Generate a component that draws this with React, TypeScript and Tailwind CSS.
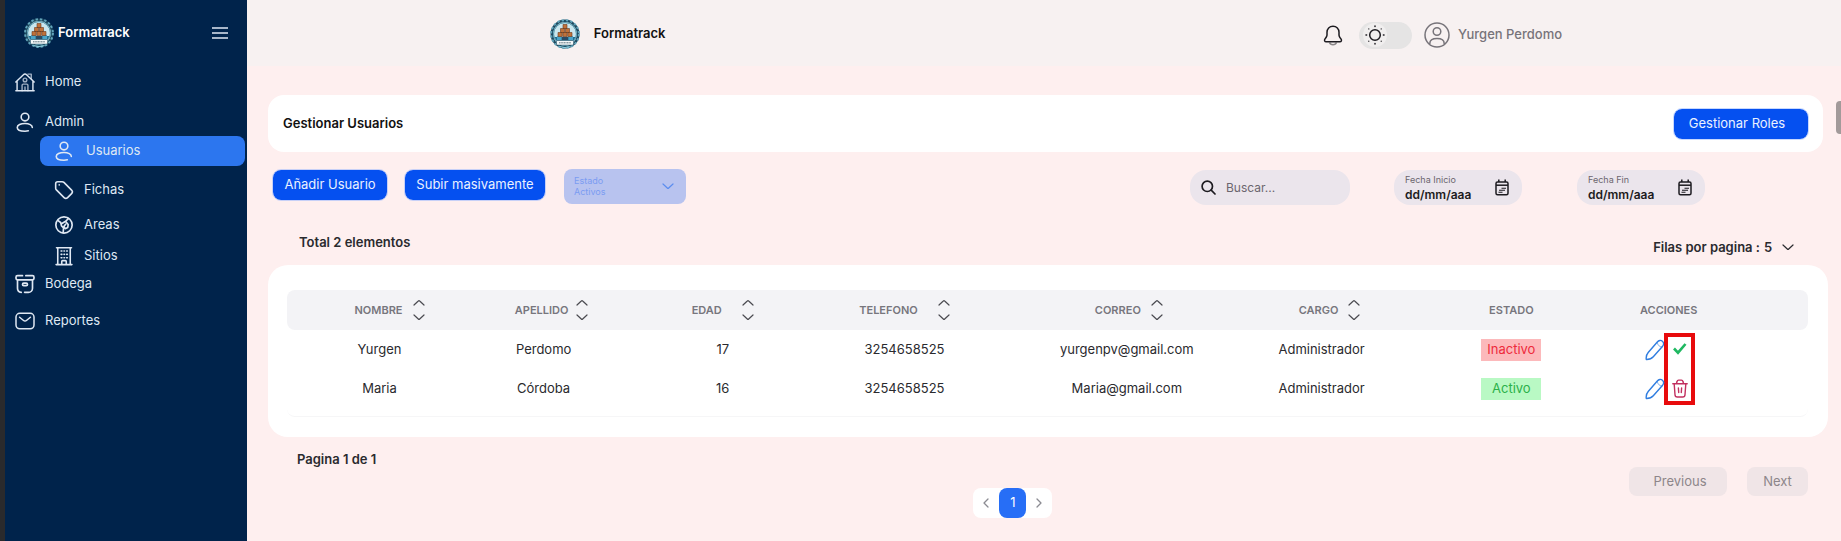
import React from "react";

type IconProps = { className?: string };

function Icon({ className = "size-5", children, sw = 1.6 }: IconProps & { children: React.ReactNode; sw?: number }) {
  return (
    <svg viewBox="0 0 24 24" fill="none" stroke="currentColor" strokeWidth={sw} strokeLinecap="round" strokeLinejoin="round" className={`shrink-0 ${className}`} aria-hidden="true">
      {children}
    </svg>
  );
}

const HomeIcon = () => (
  <Icon className="size-5" sw={1.7}>
    <path d="M1 22.500h22M2.500 11v11.500M21.500 11v11.500M1 12 9.800 3.500a3.300 3.300 0 0 1 4.400 0L23 12" />
    <path d="M15.500 2.500h4v5.500" opacity=".7" />
    <circle cx="12" cy="9.500" r="2.200" opacity=".7" />
    <path d="M8.500 22.500V16a1.500 1.500 0 0 1 1.500-1.500h4a1.500 1.500 0 0 1 1.500 1.500v6.500M12 18v4" opacity=".7" />
  </Icon>
);

const UserIcon = () => (
  <Icon className="size-5" sw={1.9}>
    <circle cx="12" cy="6" r="4.600" />
    <path d="M20.800 18.500c0-2.800-3.800-4.700-8.800-4.700s-9.300 1.900-9.300 4.700 4 4.500 9.300 4.500c1.500 0 2.800-.1 4-.4" />
  </Icon>
);

const TagIcon = () => (
  <Icon className="size-5" sw={1.9}>
    <path d="M2 4.500A2.500 2.500 0 0 1 4.500 2h5.300a3 3 0 0 1 2.100.9l9.200 9.200a3 3 0 0 1 0 4.200l-4.800 4.800a3 3 0 0 1-4.200 0L2.900 11.900A3 3 0 0 1 2 9.800z" />
    <path d="M6.300 5.800v.1" />
  </Icon>
);

const GlobeIcon = () => (
  <Icon className="size-5" sw={2}>
    <circle cx="12" cy="12" r="9.800" />
    <path d="M4.500 6.500 8 9l1 4 2.500 2.500-.5 5.500M17.500 4 14 7.500 9 10.500M14.500 8.500l2.500 3-.5 3.500-3 1.500-1.500-3 2-2.500" />
  </Icon>
);

const BuildingIcon = () => (
  <Icon className="size-5" sw={1.9}>
    <path d="M3 2h18M4.500 2v20M19.500 2v20M2.500 22.300h19M9.300 22v-3.500a1 1 0 0 1 1-1h3.400a1 1 0 0 1 1 1V22" />
    <path d="M8.500 6h1M12 6h.6M15.200 6h.8M8.500 10h1M12 10h.6M15.200 10h.8M8.500 14h1M12 14h.6M15.200 14h.8" />
  </Icon>
);

const BoxIcon = () => (
  <Icon className="size-5" sw={2}>
    <path d="M9 2H3a1.800 1.800 0 0 0-1.800 1.800v1.400A1.800 1.800 0 0 0 3 7h18a1.800 1.800 0 0 0 1.800-1.800V3.800A1.800 1.800 0 0 0 21 2h-8" />
    <path d="M3 7.500V17a5 5 0 0 0 4.500 5M21 7.500V17a5 5 0 0 1-5 5h-4.500" />
    <rect x="9" y="11" width="6" height="3" rx="1.500" />
  </Icon>
);

const MailIcon = () => (
  <Icon className="size-5" sw={1.8}>
    <rect x="1.200" y="2.800" width="21.600" height="18.500" rx="4.500" />
    <path d="m5.500 7.500 4.400 3.600a3.300 3.300 0 0 0 4.200 0l4.400-3.600" />
  </Icon>
);

function Logo() {
  return (
    <svg viewBox="0 0 30 30" className="size-[30px] shrink-0" aria-hidden="true">
      <circle cx="15" cy="15" r="13.200" fill="#c9e6ee" stroke="#1d4a60" strokeWidth="2.600" />
      <circle cx="15" cy="15" r="13.900" fill="none" stroke="#63a5bb" strokeWidth="2" strokeDasharray="2.400 2" />
      <circle cx="15" cy="15" r="11.400" fill="none" stroke="#2c7d98" strokeWidth=".8" />
      <path d="M4.500 18h21a11 11 0 0 1-21 0z" fill="#1f6f93" />
      <path d="M7 17h4.500v4H7zM18.500 17H23v4h-4.500z" fill="#4ba3c7" />
      <g fill="#c0713a" stroke="#6b3a1f" strokeWidth=".6">
        <path d="M13 5.500h4v4h-4zM10.500 9.500h4v4h-4zM15.500 9.500h4v4h-4zM8 13.500h4.200v4H8zM12.900 13.500h4.200v4h-4.200zM17.800 13.500H22v4h-4.200z" />
      </g>
      <path d="M12 18h6v3h-6z" fill="#2b4a63" />
      <rect x="6.500" y="21.500" width="17" height="4.600" rx="1" fill="#f4f8f9" stroke="#1d4a60" strokeWidth=".5" />
      <path d="M9 23.800h12" stroke="#5b6f7b" strokeWidth="1" strokeDasharray="1.200 .4" />
      <path d="M9.500 27.600q5.500 1.800 11 0" stroke="#8fd0e2" fill="none" />
    </svg>
  );
}

const Chevron = ({ className = "" }: IconProps) => (
  <svg viewBox="0 0 12 7" fill="none" stroke="currentColor" strokeWidth="1.200" strokeLinecap="round" strokeLinejoin="round" className={`h-[7px] w-3 shrink-0 ${className}`} aria-hidden="true">
    <path d="M1 1l4.300 4a1 1 0 0 0 1.400 0L11 1" />
  </svg>
);

const PageChevron = ({ className = "" }: IconProps) => (
  <svg viewBox="0 0 6 10" fill="none" stroke="currentColor" strokeWidth="1.300" strokeLinecap="round" strokeLinejoin="round" className={`h-2.5 w-1.5 ${className}`} aria-hidden="true">
    <path d="M5 1 1 5l4 4" />
  </svg>
);

const CalendarIcon = () => (
  <svg viewBox="0 0 14 17" fill="none" stroke="currentColor" className="h-[17px] w-[14px] shrink-0 text-[#1d1b20]" aria-hidden="true">
    <rect x="1" y="3" width="12" height="12.800" rx="1.500" strokeWidth="1.500" />
    <path d="M1 6.200h12" strokeWidth="1.500" />
    <path d="M3.800.6V3M10.200.6V3" strokeWidth="1.500" />
    <path d="M6.500 9.300H11M4 11.300h6M3.500 13.200h4" strokeWidth="1.100" />
  </svg>
);

const PencilIcon = () => (
  <svg viewBox="0 0 20 22" fill="none" stroke="#2f7de0" strokeWidth="1.400" strokeLinecap="round" strokeLinejoin="round" className="h-[22px] w-5 shrink-0" aria-hidden="true">
    <path d="M1.300 20.500c-.4-2.500.2-5 1.900-7L12.300 3c1.500-1.800 3.600-2.100 5.100-.8s1.500 3.500 0 5.300L8.300 17.800c-1.600 1.900-3.600 2.800-7 2.700z" />
    <path d="M12.300 3.500c.2 2.500 2 4.300 4.500 4.500" strokeWidth="1" opacity=".6" />
  </svg>
);

const TrashIcon = () => (
  <svg viewBox="0 0 16 19" fill="none" stroke="#c22f5f" strokeWidth="1.400" strokeLinecap="round" strokeLinejoin="round" className="h-[19px] w-4" aria-hidden="true">
    <path d="M.8 4.800h14.400M4.500 4.500l.6-2.200a1.500 1.500 0 0 1 1.500-1.200h2.800a1.500 1.500 0 0 1 1.500 1.200l.6 2.200M2.200 5l.8 10.800A2.300 2.300 0 0 0 5.300 18h5.400a2.300 2.300 0 0 0 2.300-2.200L13.800 5M6.400 9l.3 4.500M9.600 9l-.3 4.500" />
  </svg>
);

const CheckIcon = () => (
  <svg viewBox="0 0 16 19" fill="none" stroke="#1fb861" strokeWidth="2.600" className="h-[19px] w-4" aria-hidden="true">
    <path d="M2 8.500l4 4.200L13.500 4" />
  </svg>
);

const navItems = [
  { label: "Home", icon: <HomeIcon />, row: "h-10 pl-[15px] gap-2.5" },
  { label: "Admin", icon: <UserIcon />, row: "mt-1.5 h-7 pl-[15px] gap-2.5" },
  { label: "Usuarios", icon: <UserIcon />, row: "ml-10 mr-0.5 h-[30px] rounded-lg bg-[#2c76ef] pl-[14px] gap-3" },
  { label: "Fichas", icon: <TagIcon />, row: "mt-2 h-8 pl-[54px] gap-2.5" },
  { label: "Areas", icon: <GlobeIcon />, row: "mt-0.5 h-[34px] pl-[54px] gap-2.5" },
  { label: "Sitios", icon: <BuildingIcon />, row: "h-7 pl-[54px] gap-2.5" },
  { label: "Bodega", icon: <BoxIcon />, row: "h-7 pl-[15px] gap-2.5" },
  { label: "Reportes", icon: <MailIcon />, row: "mt-2 h-[30px] pl-[15px] gap-2.5" },
];

const columns = [
  { label: "NOMBRE", head: "w-[11.9%] pl-6", gap: "gap-2.5", cell: "pl-1" },
  { label: "APELLIDO", head: "w-[11%]", gap: "gap-2", cell: "pr-4" },
  { label: "EDAD", head: "w-[11.5%]", gap: "gap-5", cell: "" },
  { label: "TELEFONO", head: "w-[12.4%]", gap: "gap-5", cell: "" },
  { label: "CORREO", head: "w-[17.1%]", gap: "gap-2.5", cell: "pr-1" },
  { label: "CARGO", head: "w-[9.3%]", gap: "gap-2.5", cell: "pr-4" },
];

const users = [
  { cells: ["Yurgen", "Perdomo", "17", "3254658525", "yurgenpv@gmail.com", "Administrador"], active: false },
  { cells: ["Maria", "Córdoba", "16", "3254658525", "Maria@gmail.com", "Administrador"], active: true },
];

const primary = "h-[30px] rounded-lg bg-[#0550f0] text-[13px] text-[#eaf1ff] outline outline-1 outline-[#8fb2ff]/50";

function DateField({ id, label }: { id: string; label: string }) {
  return (
    <div className="flex h-[35px] w-32 items-center justify-between rounded-2xl bg-[#ebe5ec] pr-[13px] pl-[11px]">
      <div className="flex w-20 flex-col">
        <label htmlFor={id} className="text-[9px] leading-[14px] text-[#6b666e]">{label}</label>
        <input id={id} type="text" placeholder="dd/mm/aaa" className="w-full bg-transparent text-[12px] leading-[15px] font-semibold outline-none placeholder:text-[#1d1b20]" />
      </div>
      <CalendarIcon />
    </div>
  );
}

export default function App() {
  return (
    <div className="relative flex min-h-screen bg-[#feefef] font-[Inter,sans-serif] text-[13px] text-[#2a2a2e]">
      <aside className="w-[247px] shrink-0 border-l-[5px] border-[#2a2a2c] bg-[#00234b] text-[#dfe8f3]">
        <div className="flex h-[62px] items-center pt-1 pr-[19px] pl-[19px]">
          <Logo />
          <span className="ml-1 font-semibold text-white">Formatrack</span>
          <button type="button" aria-label="Menú" className="ml-auto">
            <svg viewBox="0 0 16 12" stroke="currentColor" strokeWidth="1.500" className="h-3 w-4" aria-hidden="true">
              <path d="M0 1h16M0 6h16M0 11h16" />
            </svg>
          </button>
        </div>
        <nav className="-ml-[5px] flex flex-col">
          {navItems.map((n) => (
            <a key={n.label} href="#" className={`flex items-center ${n.row}`}>
              {n.icon}
              <span>{n.label}</span>
            </a>
          ))}
        </nav>
      </aside>

      <div className="min-w-0 flex-1">
        <header className="flex h-[66px] items-center justify-between bg-[#f7f1f1] pt-0.5 pr-[17.500%] pl-[19%]">
          <div className="flex items-center gap-3.5 font-semibold text-[#111]">
            <Logo />
            Formatrack
          </div>
          <div className="flex items-center pt-0.5">
            <button type="button" aria-label="Notificaciones" className="text-[#1d1b20]">
              <svg viewBox="0 0 20 21" fill="none" stroke="currentColor" strokeWidth="1.500" strokeLinejoin="round" className="h-[21px] w-5" aria-hidden="true">
                <path d="M10 1.200c-3.600 0-6 2.600-6 6v2.900c0 .8-.3 1.500-.8 2.200l-1.300 1.900c-.8 1.200-.2 2.600 1.200 2.600h13.800c1.400 0 2-1.400 1.200-2.600l-1.300-1.900c-.5-.7-.8-1.400-.8-2.200V7.200c0-3.400-2.400-6-6-6z" />
                <path d="M6.500 17.500c.6 1.600 1.900 2.300 3.500 2.300s2.900-.7 3.500-2.300" opacity=".5" />
              </svg>
            </button>
            <button type="button" role="switch" aria-checked="false" aria-label="Modo oscuro" className="ml-4 flex h-[27px] w-[53px] items-center rounded-full bg-[#e5e4e4] pl-1">
              <span className="flex size-6 items-center justify-center rounded-full bg-[#f0eeee] text-[#1d1b20]">
                <svg viewBox="0 0 20 20" fill="none" stroke="currentColor" strokeWidth="1.500" strokeLinecap="round" className="size-5" aria-hidden="true">
                  <circle cx="10" cy="10" r="5.300" />
                  <path d="M10 1v.6M10 18.400v.6M1 10h.6M18.400 10h.6" />
                  <path d="M3.800 3.800v.1M16.200 3.800v.1M3.800 16.200v.1M16.200 16.200v.1" strokeWidth="1.200" />
                </svg>
              </span>
            </button>
            <svg viewBox="0 0 26 26" fill="none" stroke="#77747a" strokeWidth="1.500" className="ml-3 size-[26px]" aria-hidden="true">
              <circle cx="13" cy="13" r="12" />
              <circle cx="13" cy="9.500" r="3.800" />
              <path d="M5.800 22v-.6c0-3.200 3-4.900 7.200-4.900s7.200 1.700 7.200 4.900v.6" />
            </svg>
            <span className="ml-2 font-medium text-[#77747a]">Yurgen Perdomo</span>
          </div>
        </header>

        <main className="pt-[29px] pr-[13px] pl-[21px]">
          <section className="mr-[5px] flex h-[57px] items-center justify-between rounded-2xl bg-white pr-[15px] pl-[15px]">
            <h1 className="font-semibold text-[#111]">Gestionar Usuarios</h1>
            <button type="button" className={`w-[134px] pr-2 ${primary}`}>Gestionar Roles</button>
          </section>

          <div className="mt-4 flex h-[37px] items-center pr-[123px] pl-[5px]">
            <div className="flex gap-[18px] pb-1">
              <button type="button" className={`w-[114px] ${primary}`}>Añadir Usuario</button>
              <button type="button" className={`w-[140px] ${primary}`}>Subir masivamente</button>
            </div>
            <div className="relative ml-[19px] flex h-[35px] w-[122px] flex-col justify-center rounded-lg bg-[#b8c3ef] pb-0.5 pl-2.5 text-[9px] text-[#7b9cf2]">
              <label htmlFor="estado" className="leading-[11px]">Estado</label>
              <select id="estado" className="w-full appearance-none bg-transparent leading-[11px] outline-none">
                <option>Activos</option>
              </select>
              <Chevron className="pointer-events-none absolute top-3.5 right-3 text-[#5b8def]" />
            </div>
            <div className="ml-auto flex items-center pt-0.5">
              <div className="flex h-[35px] w-40 items-center gap-2.5 rounded-2xl bg-[#ebe5ec] pl-[11px]">
                <svg viewBox="0 0 15 15" fill="none" stroke="#1d1b20" strokeWidth="1.700" strokeLinecap="round" className="size-[15px] shrink-0" aria-hidden="true">
                  <circle cx="6.300" cy="6.300" r="5.200" />
                  <path d="m10.200 10.200 3.800 3.800" />
                </svg>
                <input type="search" aria-label="Buscar" placeholder="Buscar..." className="w-full min-w-0 bg-transparent text-[12px] outline-none placeholder:text-[#6b666e]" />
              </div>
              <div className="ml-11"><DateField id="fecha-inicio" label="Fecha Inicio" /></div>
              <div className="ml-[55px]"><DateField id="fecha-fin" label="Fecha Fin" /></div>
            </div>
          </div>

          <div className="flex h-[60px] items-end justify-between pr-[34px] pl-[31px] font-semibold">
            <p className="pb-[13px]">Total 2 elementos</p>
            <div className="flex items-center pb-2">
              <label htmlFor="filas" className="mr-1">Filas por pagina :</label>
              <div className="relative flex items-center">
                <select id="filas" className="w-[30px] appearance-none bg-transparent outline-none">
                  <option>5</option>
                </select>
                <Chevron className="pointer-events-none absolute right-0" />
              </div>
            </div>
          </div>

          <section className="rounded-[20px] bg-white pt-[25px] pr-5 pb-5 pl-[19px]">
            <div className="rounded-lg border-b border-[#f6f6f7] pb-2">
              <table className="w-full table-fixed border-separate border-spacing-0">
                <thead>
                  <tr className="h-10 text-[11px] text-[#77767d]">
                    {columns.map((c) => (
                      <th key={c.label} scope="col" className={`bg-[#f3f3f6] p-0 font-semibold first:rounded-l-lg ${c.head}`}>
                        <button type="button" className={`inline-flex items-center align-middle ${c.gap}`}>
                          {c.label}
                          <span className="flex flex-col gap-2 text-[#4a4a50]">
                            <Chevron className="rotate-180" />
                            <Chevron />
                          </span>
                        </button>
                      </th>
                    ))}
                    <th scope="col" className="w-[14.600%] bg-[#f3f3f6] p-0 font-semibold">ESTADO</th>
                    <th scope="col" className="w-[12.200%] rounded-r-lg bg-[#f3f3f6] p-0 pr-[93px] font-semibold">ACCIONES</th>
                  </tr>
                </thead>
                <tbody className="text-center">
                  {users.map((u) => (
                    <tr key={u.cells[0]} className="h-[39px]">
                      {u.cells.map((v, i) => (
                        <td key={columns[i].label} className={`p-0 ${columns[i].cell}`}>{v}</td>
                      ))}
                      <td className="p-0">
                        {u.active ? (
                          <span className="inline-flex h-[22px] w-[60px] items-center justify-center bg-[#b9f9c4] align-middle text-[#2cb14a]">Activo</span>
                        ) : (
                          <span className="inline-flex h-[22px] w-[60px] items-center justify-center bg-[#fcb9bb] align-middle text-[#ee2b3b]">Inactivo</span>
                        )}
                      </td>
                      <td className="p-0 pr-[97px]">
                        <div className="relative flex items-center justify-center gap-[7px]">
                          <button type="button" aria-label={`Editar ${u.cells[0]}`}><PencilIcon /></button>
                          <button type="button" aria-label={u.active ? `Eliminar ${u.cells[0]}` : `Activar ${u.cells[0]}`}>
                            {u.active ? <TrashIcon /> : <CheckIcon />}
                          </button>
                          {!u.active && <span className="pointer-events-none absolute -top-1.5 left-[calc(50%-3px)] h-[72px] w-[31px] border-4 border-[#e80b0d]" />}
                        </div>
                      </td>
                    </tr>
                  ))}
                </tbody>
              </table>
            </div>
          </section>

          <footer className="grid grid-cols-[705fr_auto_755fr] items-start pr-5">
            <p className="mt-[13px] pl-[29px] font-semibold">Pagina 1 de 1</p>
            <nav aria-label="Paginación" className="mt-[51px] flex h-[30px] rounded-lg bg-white text-[#8b8b92]">
              <button type="button" aria-label="Página anterior" className="flex w-[26px] items-center justify-center">
                <PageChevron />
              </button>
              <button type="button" aria-current="page" className="w-[27px] rounded-lg bg-[#276ef6] text-white">1</button>
              <button type="button" aria-label="Página siguiente" className="flex w-[26px] items-center justify-center">
                <PageChevron className="rotate-180" />
              </button>
            </nav>
            <div className="mt-[30px] flex justify-end gap-5 text-[#8d868a]">
              <button type="button" className="h-[29px] w-[98px] rounded-lg bg-[#f0e5e7] pl-1">Previous</button>
              <button type="button" className="h-[29px] w-[61px] rounded-lg bg-[#f0e5e7]">Next</button>
            </div>
          </footer>
        </main>
      </div>
      <div className="absolute top-[101px] right-0 h-[33px] w-[5px] rounded-l-sm bg-[#a29a9a]" />
    </div>
  );
}
